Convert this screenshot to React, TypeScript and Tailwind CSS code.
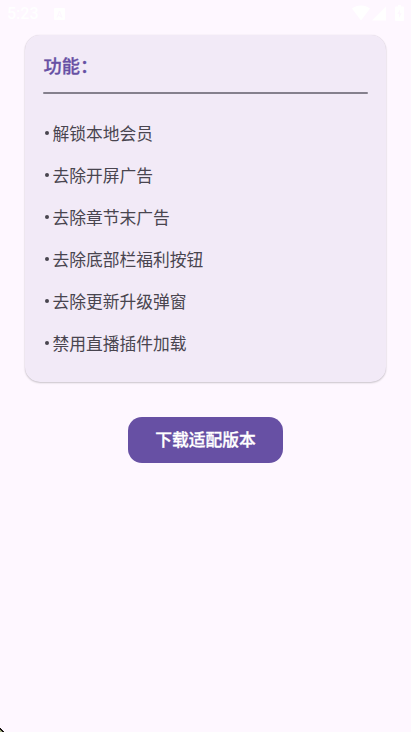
const features = [
  '解锁本地会员',
  '去除开屏广告',
  '去除章节末广告',
  '去除底部栏福利按钮',
  '去除更新升级弹窗',
  '禁用直播插件加载',
];

function StatusBar() {
  return (
    <header className="flex h-[35px] items-start justify-between pl-[7px] pr-[7px] pt-[5px] text-white">
      <div className="flex items-center gap-[17px]">
        <span className="w-[30px] whitespace-nowrap font-['Roboto',sans-serif] text-[16px] font-medium leading-[18px]">5:23</span>
        <svg width="11" height="12" viewBox="0 0 11 12">
          <rect width="11" height="12" rx="1" fill="currentColor" />
          <path d="M3 9.500L5.500 3L8 9.500M4 7l4 2" fill="none" stroke="#fef7ff" strokeWidth="1" />
        </svg>
      </div>
      <div className="flex items-start">
        {/* Wifi */}
        <svg width="18" height="16" viewBox="0 0 18 16" className="mr-[2px]">
          <path d="M0 3.5C5 -.5 13 -.5 18 3.5L9 15.5z" fill="currentColor" />
        </svg>
        {/* Signal */}
        <svg width="14" height="16" viewBox="0 0 14 16" className="mr-[9px]">
          <path d="M14 1.5v14H0z" fill="currentColor" />
        </svg>
        {/* Battery */}
        <svg width="9" height="16" viewBox="0 0 9 16">
          <path d="M3 0h3v1.5h2q1 0 1 1V15q0 1-1 1H1q-1 0-1-1V2.500q0-1 1-1h2z" fill="currentColor" />
          <path d="M5 4.500L2.300 9H4v4l2.700-4.800H5z" fill="#fef7ff" />
        </svg>
      </div>
    </header>
  );
}

export default function App() {
  return (
    <div className="relative flex h-[732px] w-[411px] flex-col overflow-hidden bg-[#fef7ff] font-['Noto_Sans_CJK_SC',sans-serif]">
      <StatusBar />

      <main className="flex flex-col items-center">
        {/* Feature card */}
        <section className="h-[347px] w-[361px] rounded-[15px] bg-[#f2eaf7] px-[18px] pt-4 shadow-[0_1px_2px_rgba(0,0,0,0.2),0_0_1px_rgba(0,0,0,0.12)]">
          <h1 className="ml-[0.5px] text-[18.2px] font-medium leading-7 text-[#6750a4] [-webkit-text-stroke:0.3px_#6750a4]">功能：</h1>
          <div className="mt-[13px] h-[2px] rounded-full bg-[#85808d]" />
          <ul className="mt-[19px] text-[16.75px] text-[#49454f]">
            {features.map((feature) => (
              <li key={feature} className="flex h-[42px] items-center whitespace-nowrap">
                <span className="mb-[2px] ml-[1.5px] mr-1 h-[4px] w-[4px] rounded-full bg-[#49454f]" />
                {feature}
              </li>
            ))}
          </ul>
        </section>

        <button className="mt-[35px] flex h-[46px] w-[155px] items-center justify-center rounded-[14px] bg-[#6750a4] text-[16.75px] font-medium text-white [-webkit-text-stroke:0.3px_white]">
          下载适配版本
        </button>
      </main>

      {/* Corner pixels */}
      <svg width="4" height="4" viewBox="0 0 4 4" className="absolute bottom-0 left-0" shapeRendering="crispEdges">
        <path d="M0 0h1v1h1v1h1v1h1v1H0z" fill="#17130f" />
        <path d="M0 2h1v1h1v1H0z" fill="#a7b486" />
      </svg>
    </div>
  );
}
